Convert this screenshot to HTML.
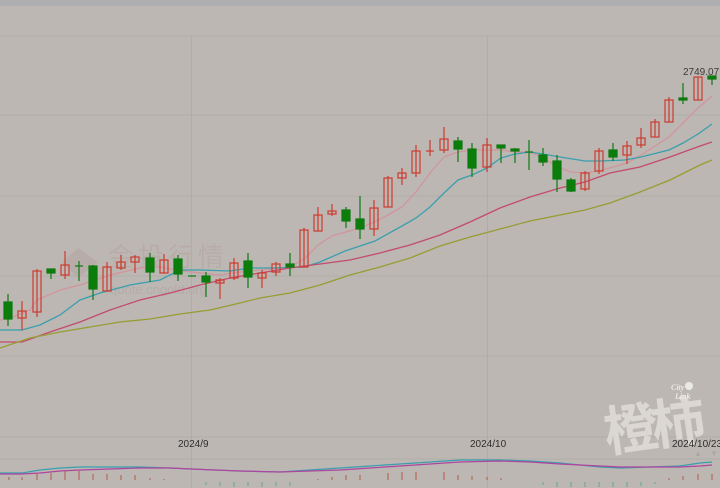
<!DOCTYPE html>
<html><head><meta charset="utf-8"><style>
html,body{margin:0;padding:0;width:720px;height:488px;overflow:hidden;background:#bcb7b3}
svg{display:block}
</style></head><body>
<svg width="720" height="488" viewBox="0 0 720 488" xmlns="http://www.w3.org/2000/svg" font-family="Liberation Sans, sans-serif">
<rect width="720" height="488" fill="#bcb7b3"/>
<rect width="720" height="6" fill="#afafb1"/>
<g stroke="#b1aca8" stroke-width="1">
<line x1="0" y1="36" x2="720" y2="36"/><line x1="0" y1="115" x2="720" y2="115"/>
<line x1="0" y1="196" x2="720" y2="196"/><line x1="0" y1="276" x2="720" y2="276"/>
<line x1="0" y1="356" x2="720" y2="356"/><line x1="0" y1="437" x2="720" y2="437"/>
<line x1="0" y1="459" x2="720" y2="459"/>
<line x1="191.5" y1="36" x2="191.5" y2="488"/><line x1="487.5" y1="36" x2="487.5" y2="488"/>
</g>
<!-- watermark -->
<text x="108" y="266" font-size="26" fill="#b8aca8" font-family="Liberation Sans, Noto Sans CJK SC, sans-serif" letter-spacing="4">金投行情</text>
<text x="110" y="294" font-size="13" fill="#b5aca8">quote.cngold.org</text>
<path d="M78 248 L98 262 L78 278 L62 262 Z" fill="#b8aca8"/>
<!-- MAs -->
<g fill="none" stroke-width="1.3">
<polyline stroke="#d1959b" points="0,320 10,318 30,310 37,300 60,290 80,285 110,275 140,268 160,267 175,270 200,273 220,275 240,272 260,270 290,267 304,259 318,245 332,236 360,228 374,222 388,215 402,207 416,192 430,173 444,157 458,152 472,150 501,150 515,152 529,152 543,157 557,167 571,172 585,173 599,171 613,167 627,163 641,155 655,146 669,137 683,123 698,108 712,96"/>
<polyline stroke="#3a9fae" points="0,330 22,330 40,325 60,315 80,300 100,293 130,285 160,280 180,270 200,270 230,271 250,268 275,268 304,267 320,262 345,251 375,241 402,226 416,218 430,207 444,193 458,180 472,175 487,168 501,158 515,154 530,152 543,154 560,157 585,161 600,161 625,160 641,157 669,150 683,143 698,134 712,124"/>
<polyline stroke="#c44b6c" points="0,342 22,342 50,332 80,322 110,310 140,300 170,293 200,285 230,278 260,273 290,268 320,264 350,260 380,253 410,245 440,235 470,222 500,208 530,197 560,188 585,182 610,173 640,167 670,157 700,146 712,142"/>
<polyline stroke="#959e33" points="0,348 30,338 60,332 90,327 120,322 150,319 180,314 210,310 240,303 260,298 290,293 320,285 350,275 380,267 410,258 440,246 470,237 500,229 530,221 560,215 585,210 610,203 640,192 670,180 700,165 712,160"/>
</g>
<!-- candles -->
<g stroke-width="1.2">
<g stroke="#cc3a2e" fill="none">
<line x1="22" y1="301" x2="22" y2="330"/><rect x="18" y="311" width="8" height="7"/>
<line x1="37" y1="269" x2="37" y2="317"/><rect x="33" y="271" width="8" height="41"/>
<line x1="65" y1="251" x2="65" y2="279"/><rect x="61" y="265" width="8" height="10"/>
<line x1="107" y1="262" x2="107" y2="291"/><rect x="103" y="267" width="8" height="24"/>
<line x1="121" y1="255" x2="121" y2="270"/><rect x="117" y="262" width="8" height="6"/>
<line x1="135" y1="255" x2="135" y2="273"/><rect x="131" y="257" width="8" height="5"/>
<line x1="164" y1="254" x2="164" y2="273"/><rect x="160" y="260" width="8" height="13"/>
<line x1="220" y1="278" x2="220" y2="299"/><rect x="216" y="280" width="8" height="3"/>
<line x1="234" y1="258" x2="234" y2="280"/><rect x="230" y="263" width="8" height="15"/>
<line x1="262" y1="270" x2="262" y2="288"/><rect x="258" y="273" width="8" height="5"/>
<line x1="276" y1="262" x2="276" y2="276"/><rect x="272" y="264" width="8" height="8"/>
<line x1="304" y1="228" x2="304" y2="267"/><rect x="300" y="230" width="8" height="37"/>
<line x1="318" y1="207" x2="318" y2="231"/><rect x="314" y="215" width="8" height="16"/>
<line x1="332" y1="204" x2="332" y2="216"/><rect x="328" y="211" width="8" height="3"/>
<line x1="374" y1="200" x2="374" y2="236"/><rect x="370" y="208" width="8" height="21"/>
<line x1="388" y1="176" x2="388" y2="207"/><rect x="384" y="178" width="8" height="29"/>
<line x1="402" y1="168" x2="402" y2="185"/><rect x="398" y="173" width="8" height="5"/>
<line x1="416" y1="145" x2="416" y2="177"/><rect x="412" y="151" width="8" height="22"/>
<line x1="430" y1="140" x2="430" y2="156"/><line x1="426" y1="151" x2="434" y2="151"/>
<line x1="444" y1="127" x2="444" y2="153"/><rect x="440" y="139" width="8" height="11"/>
<line x1="487" y1="138" x2="487" y2="172"/><rect x="483" y="145" width="8" height="22"/>
<line x1="585" y1="171" x2="585" y2="191"/><rect x="581" y="173" width="8" height="16"/>
<line x1="599" y1="148" x2="599" y2="174"/><rect x="595" y="151" width="8" height="20"/>
<line x1="627" y1="141" x2="627" y2="164"/><rect x="623" y="146" width="8" height="9"/>
<line x1="641" y1="128" x2="641" y2="148"/><rect x="637" y="138" width="8" height="7"/>
<line x1="655" y1="119" x2="655" y2="137"/><rect x="651" y="122" width="8" height="15"/>
<line x1="669" y1="97" x2="669" y2="122"/><rect x="665" y="100" width="8" height="22"/>
<line x1="698" y1="77" x2="698" y2="100"/><rect x="694" y="77" width="8" height="23"/>
</g>
<g stroke="#0d7a10" fill="#0b7d0b">
<line x1="8" y1="294" x2="8" y2="326"/><rect x="4" y="302" width="8" height="17"/>
<line x1="51" y1="269" x2="51" y2="279"/><rect x="47" y="269" width="8" height="4"/>
<line x1="79" y1="261" x2="79" y2="281"/><line x1="75" y1="266" x2="83" y2="266"/>
<line x1="93" y1="265" x2="93" y2="300"/><rect x="89" y="266" width="8" height="23"/>
<line x1="150" y1="253" x2="150" y2="282"/><rect x="146" y="258" width="8" height="14"/>
<line x1="178" y1="255" x2="178" y2="281"/><rect x="174" y="259" width="8" height="15"/>
<line x1="188" y1="276" x2="196" y2="276"/>
<line x1="206" y1="272" x2="206" y2="297"/><rect x="202" y="276" width="8" height="6"/>
<line x1="248" y1="253" x2="248" y2="288"/><rect x="244" y="261" width="8" height="16"/>
<line x1="290" y1="253" x2="290" y2="276"/><rect x="286" y="264" width="8" height="3"/>
<line x1="346" y1="207" x2="346" y2="228"/><rect x="342" y="210" width="8" height="11"/>
<line x1="360" y1="196" x2="360" y2="239"/><rect x="356" y="219" width="8" height="10"/>
<line x1="458" y1="137" x2="458" y2="162"/><rect x="454" y="141" width="8" height="8"/>
<line x1="472" y1="143" x2="472" y2="177"/><rect x="468" y="149" width="8" height="19"/>
<line x1="501" y1="145" x2="501" y2="163"/><rect x="497" y="145" width="8" height="3"/>
<line x1="515" y1="148" x2="515" y2="163"/><rect x="511" y="149" width="8" height="2"/>
<line x1="529" y1="140" x2="529" y2="170"/><line x1="525" y1="152" x2="533" y2="152"/>
<line x1="543" y1="148" x2="543" y2="166"/><rect x="539" y="155" width="8" height="7"/>
<line x1="557" y1="155" x2="557" y2="192"/><rect x="553" y="161" width="8" height="18"/>
<line x1="571" y1="178" x2="571" y2="192"/><rect x="567" y="180" width="8" height="11"/>
<line x1="613" y1="143" x2="613" y2="161"/><rect x="609" y="150" width="8" height="7"/>
<line x1="683" y1="83" x2="683" y2="104"/><rect x="679" y="98" width="8" height="2"/>
<line x1="712" y1="76" x2="712" y2="85"/><rect x="708" y="76" width="8" height="3"/>
</g>
</g>
<text x="683" y="75" font-size="10" fill="#3a3a3a">2749.07</text>
<!-- logo watermark -->
<g transform="translate(607,452) rotate(-8)">
<text x="0" y="0" font-size="54" font-weight="bold" fill="#e6e3e0" opacity="0.75" font-family="Noto Sans CJK SC, WenQuanYi Zen Hei, sans-serif" letter-spacing="-6">橙柿</text>
</g>
<text x="671" y="390" font-size="8" font-style="italic" font-weight="bold" fill="#ebe9e6" font-family="Liberation Serif, serif">City</text>
<text x="675" y="399" font-size="8" font-style="italic" font-weight="bold" fill="#ebe9e6" font-family="Liberation Serif, serif">Link</text>
<circle cx="689" cy="386" r="4" fill="#ebe9e6"/>
<!-- date labels -->
<g font-size="10" fill="#2e2e2e">
<text x="178" y="447">2024/9</text><text x="470" y="447">2024/10</text><text x="672" y="447">2024/10/23</text>
</g>
<text x="694" y="456" font-size="8" fill="#aaa6a2">▲</text><text x="710" y="456" font-size="8" fill="#aaa6a2">▼</text>
<!-- indicator -->
<g fill="none" stroke-width="1.2">
<polyline stroke="#3a9fae" points="0,473 22,473 40,470 60,468 80,467 110,467 140,467 170,468 191,469 215,470 240,471 280,472 310,470 340,468 370,466 400,464 430,462 460,460 500,460 530,461 560,463 580,465 600,467 620,468 650,467 680,466 700,463 712,462"/>
<polyline stroke="#b0449e" points="0,474 22,474 40,473 60,471 80,470 110,469 140,468 170,468 191,469 215,470 240,471 280,472 310,471 340,470 370,468 400,466 430,464 460,462 500,461 530,462 560,464 580,465 600,466 620,467 650,467 680,467 700,466 712,465"/>
</g>
<g stroke="#b4584a" stroke-width="1">
<line x1="9" y1="477" x2="9" y2="480"/><line x1="22" y1="477" x2="22" y2="480"/><line x1="37" y1="474" x2="37" y2="480"/><line x1="51" y1="473" x2="51" y2="480"/><line x1="65" y1="471" x2="65" y2="480"/><line x1="79" y1="471" x2="79" y2="480"/><line x1="93" y1="474" x2="93" y2="480"/><line x1="107" y1="474" x2="107" y2="480"/><line x1="121" y1="475" x2="121" y2="480"/><line x1="135" y1="475" x2="135" y2="480"/><line x1="150" y1="478" x2="150" y2="480"/><line x1="164" y1="479" x2="164" y2="480"/>
<line x1="318" y1="479" x2="318" y2="480"/><line x1="332" y1="477" x2="332" y2="480"/><line x1="346" y1="475" x2="346" y2="480"/><line x1="360" y1="475" x2="360" y2="480"/><line x1="388" y1="473" x2="388" y2="480"/><line x1="402" y1="472" x2="402" y2="480"/><line x1="416" y1="472" x2="416" y2="480"/><line x1="444" y1="472" x2="444" y2="480"/><line x1="458" y1="475" x2="458" y2="480"/><line x1="472" y1="476" x2="472" y2="480"/><line x1="487" y1="477" x2="487" y2="480"/><line x1="501" y1="478" x2="501" y2="480"/>
<line x1="669" y1="478" x2="669" y2="480"/><line x1="683" y1="476" x2="683" y2="480"/><line x1="698" y1="474" x2="698" y2="480"/><line x1="712" y1="474" x2="712" y2="480"/>
</g>
<g stroke="#5fa98a" stroke-width="1">
<line x1="206" y1="482" x2="206" y2="485"/><line x1="220" y1="482" x2="220" y2="486"/><line x1="234" y1="482" x2="234" y2="487"/><line x1="248" y1="482" x2="248" y2="486"/><line x1="262" y1="482" x2="262" y2="487"/><line x1="276" y1="482" x2="276" y2="486"/><line x1="290" y1="482" x2="290" y2="486"/>
<line x1="543" y1="482" x2="543" y2="485"/><line x1="557" y1="482" x2="557" y2="487"/><line x1="571" y1="482" x2="571" y2="487"/><line x1="585" y1="482" x2="585" y2="487"/><line x1="599" y1="482" x2="599" y2="487"/><line x1="613" y1="482" x2="613" y2="487"/><line x1="627" y1="482" x2="627" y2="487"/><line x1="641" y1="482" x2="641" y2="486"/><line x1="655" y1="482" x2="655" y2="484"/>
</g>
</svg>
</body></html>
